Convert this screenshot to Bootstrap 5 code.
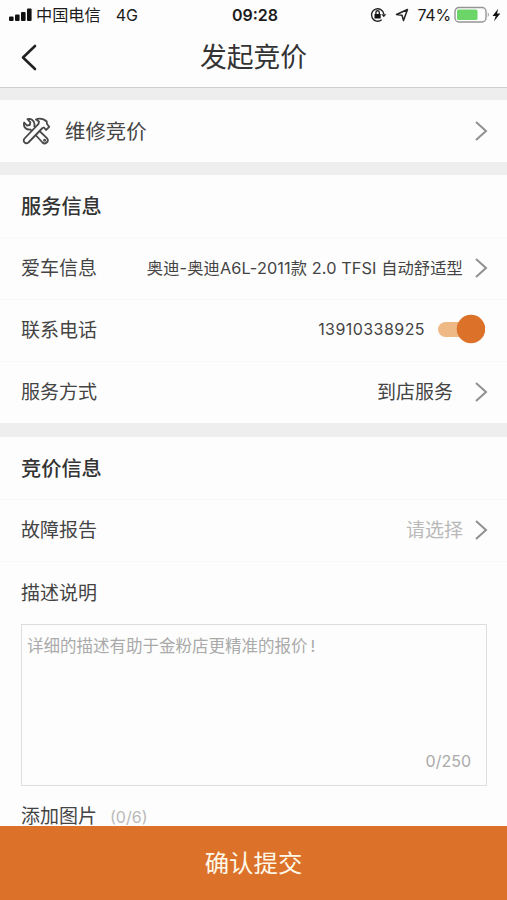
<!DOCTYPE html>
<html lang="zh-CN">
<head>
<meta charset="utf-8">
<meta name="viewport" content="width=device-width, initial-scale=1">
<title>发起竞价</title>
<link href="https://cdn.jsdelivr.net/npm/bootstrap@5.3.0/dist/css/bootstrap.min.css" rel="stylesheet">
<style>
body{font-family:Inter,"Noto Sans CJK SC",sans-serif;color:#444;background:#fdfdfd;font-size:19px;line-height:1.3}
.screen{height:900px}
.status{height:30px;color:#1c1c1c;font-size:16px;padding:0 6px 0 9px}
.status-side{flex:1 1 0}
.carrier{font-size:16.2px;margin-left:3px;padding-top:1px}
.titlebar{height:58px;border-bottom:1px solid #cfcfcf;padding:0 20px 2px;color:#333}
.titlebar h1{font-size:26.8px;font-weight:400;line-height:1}
.back{width:18px}
.gap-band{background:#eee;height:13px}
.cell{height:62px;padding:0 19px 0 21px}
.cell + .cell{border-top:1px solid #f8f8f8}
.cell > span{padding-top:2px}
.cell-title{font-size:20.2px;font-weight:500;color:#333;padding-top:2px}
.repair{font-size:20.4px}
.cell > .car{font-size:16.3px;letter-spacing:.09px;padding-top:0}
.cell > .phone{font-size:16px;letter-spacing:.44px;padding:0 0 2px}
.pale{color:#b9b9b9}
.chev{width:14px;height:22px;margin-left:11px}
.cell + .cell .chev{margin-bottom:2px}
.chev-wide{margin-left:21px}
.toggle{width:48px;height:30px;margin:0 3px 3px 12px}
.desc{margin:0 20px 0 21px;height:162px;border:1px solid #dedede;padding:11px 15px 13px 5px;color:#aaa;font-size:16.5px}
.excl{margin-left:3px}
.pics{height:40px;padding:22px 21px 0}
.submit{height:74px;background:#dc722a;color:#fff8e9;font-size:24.4px}
.submit:hover{background:#dc722a;color:#fff8e9}
</style>
</head>
<body>
<div class="screen d-flex flex-column overflow-hidden">
  <div class="status d-flex align-items-center flex-shrink-0">
    <div class="status-side d-flex align-items-center">
      <svg width="24" height="14" viewBox="0 0 24 14" fill="#111"><rect x="0" y="8.500" width="4.600" height="4.500" rx="1"/><rect x="6" y="6.500" width="4.600" height="6.500" rx="1"/><rect x="12" y="4" width="4.600" height="9" rx="1"/><rect x="18" y="0.500" width="4.600" height="12.500" rx="1"/></svg>
      <span class="carrier">中国电信</span><span style="margin-left:15px">4G</span>
    </div>
    <div class="fw-semibold">09:28</div>
    <div class="status-side d-flex align-items-center justify-content-end">
      <svg width="17" height="16" viewBox="0 0 17 16" fill="none" stroke="#222" stroke-width="1.400"><path d="M11.700 12.700A6.200 6.200 0 1 1 13.800 7"/><path d="M11.300 7.300h5l-2.500 3z" fill="#222" stroke="none"/><rect x="4.500" y="7" width="6.200" height="4.500" fill="#111" stroke="none"/><path d="M5.900 7V5.500a1.700 1.700 0 0 1 3.400 0V7"/></svg>
      <svg width="14" height="14" viewBox="0 0 14 14" fill="none" stroke="#222" stroke-width="1.500" stroke-linejoin="round" style="margin-left:8px"><path d="M1.500 6.500L12.500 1.500 8.500 12.500 7 7.300z"/></svg>
      <span style="margin-left:8px;letter-spacing:-.2px">74%</span>
      <svg width="36" height="18" viewBox="0 0 36 18" style="margin-left:3px"><rect x="1" y="1.500" width="31" height="14.500" rx="4" fill="#fff" stroke="#949494" stroke-width="1.400"/><rect x="3" y="3.500" width="20.500" height="10.500" rx="1.500" fill="#6bd567"/><path d="M33.800 6.500q2 2.200 0 4.500z" fill="#888"/></svg>
      <svg width="9" height="14" viewBox="0 0 9 14" fill="#111" style="margin-left:2px"><path d="M6.200 0.800L0.500 8h3.200L2 13.200 8.300 5.600H5z"/></svg>
    </div>
  </div>
  <header class="titlebar d-flex align-items-center justify-content-between flex-shrink-0">
    <svg class="back" height="28" viewBox="0 0 18 28" fill="none" stroke="#222" stroke-width="2.600" stroke-linecap="round" stroke-linejoin="round"><path d="M15 2L3 13.500l12 11.500"/></svg>
    <h1 class="m-0">发起竞价</h1>
    <span class="back"></span>
  </header>
  <div class="gap-band flex-shrink-0" style="height:12px"></div>
  <div class="cell repair d-flex align-items-center flex-shrink-0">
    <svg width="30" height="28" viewBox="0 0 30 28" fill="#fdfdfd" stroke="#484848" stroke-width="1.800" stroke-linejoin="round"><path d="M9.500 12.500L21.500 25.500q2 1.900 4.200 0t.2-4.300L13.300 9Q14.300 5 11 2.800 9 1.500 6.500 2.200L9.300 5.300 8.800 8 6 8.500 3.200 5.500Q2.200 8.500 4.300 11 6.500 13 9.500 12.500z"/><path d="M17.500 6.800L3.500 21.500q-1.600 2 0 3.800t3.900.2L21.500 11l1.500-.5 2 2.500 3.200-3.200L26 7l-.3-2.500Q22 .8 16.500 1.800l-1.500.7 3 2z"/><circle cx="23.600" cy="23.200" r=".6"/></svg>
    <span class="flex-grow-1" style="margin-left:14px">维修竞价</span>
    <svg class="chev" viewBox="0 0 14 22" fill="none" stroke="#909090" stroke-width="2"><path d="M2 2l10 9-10 9"/></svg>
  </div>
  <div class="gap-band flex-shrink-0"></div>
  <section class="flex-shrink-0">
    <div class="cell cell-title d-flex align-items-center">服务信息</div>
    <div class="cell d-flex align-items-center"><span class="me-auto">爱车信息</span><span class="car">奥迪-奥迪A6L-2011款 2.0 TFSI 自动舒适型</span>
      <svg class="chev" viewBox="0 0 14 22" fill="none" stroke="#909090" stroke-width="2"><path d="M2 2l10 9-10 9"/></svg></div>
    <div class="cell d-flex align-items-center"><span class="me-auto">联系电话</span><span class="phone">13910338925</span>
      <svg class="toggle" viewBox="0 0 48 30"><rect x="1" y="8" width="40" height="15" rx="7.500" fill="#efb986"/><circle cx="34" cy="15" r="14.300" fill="#dc722a"/></svg></div>
    <div class="cell d-flex align-items-center"><span class="me-auto">服务方式</span><span>到店服务</span>
      <svg class="chev chev-wide" viewBox="0 0 14 22" fill="none" stroke="#909090" stroke-width="2"><path d="M2 2l10 9-10 9"/></svg></div>
  </section>
  <div class="gap-band flex-shrink-0" style="height:14px"></div>
  <section class="flex-shrink-0">
    <div class="cell cell-title d-flex align-items-center">竞价信息</div>
    <div class="cell d-flex align-items-center"><span class="me-auto">故障报告</span><span class="pale">请选择</span>
      <svg class="chev" viewBox="0 0 14 22" fill="none" stroke="#909090" stroke-width="2"><path d="M2 2l10 9-10 9"/></svg></div>
    <div class="cell d-flex align-items-center" style="height:63px"><span>描述说明</span></div>
    <div class="desc d-flex flex-column justify-content-between"><span>详细的描述有助于金粉店更精准的报价<span class="excl">!</span></span><span class="align-self-end" style="font-size:16px">0/250</span></div>
  </section>
  <div class="pics d-flex align-items-center flex-shrink-0"><span>添加图片</span><span class="pale" style="font-size:16px;margin-left:13px">(0/6)</span></div>
  <button class="submit btn rounded-0 border-0 w-100 p-0 flex-shrink-0 position-relative" type="button">确认提交</button>
</div>
<script src="https://cdn.jsdelivr.net/npm/bootstrap@5.3.0/dist/js/bootstrap.bundle.min.js"></script>
</body>
</html>
